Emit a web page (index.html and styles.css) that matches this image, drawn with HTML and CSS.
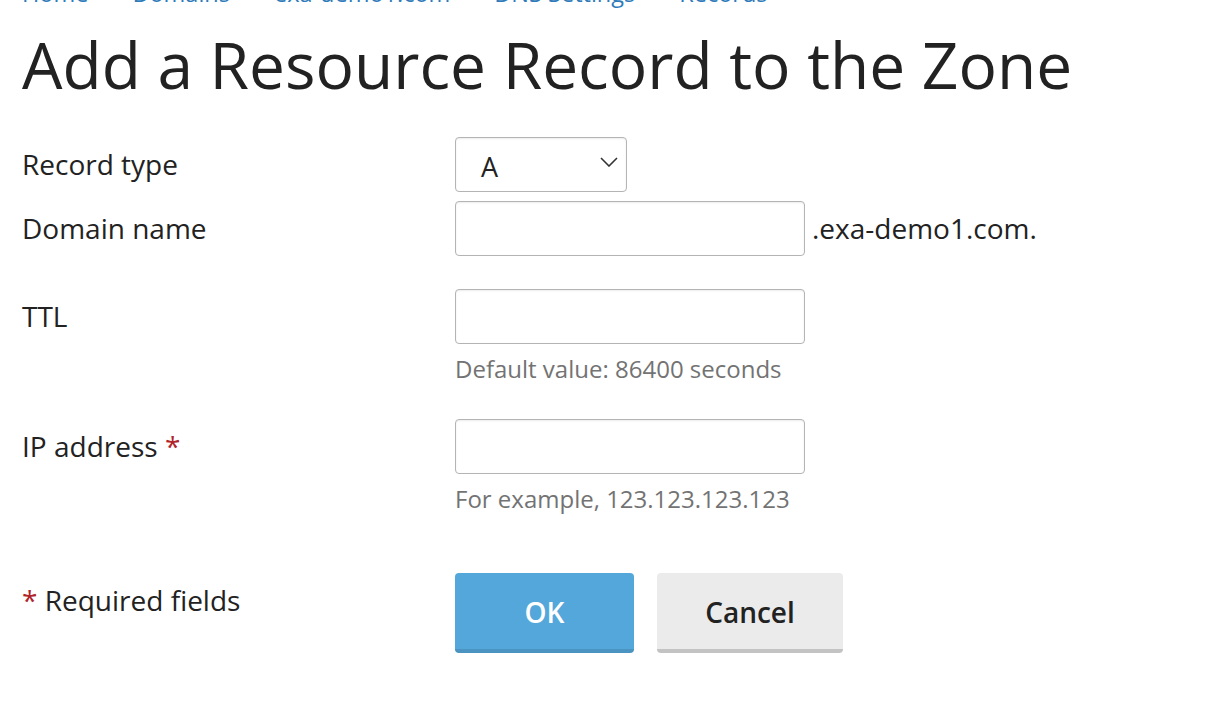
FILE: index.html
```html
<!DOCTYPE html>
<html lang="en">
<head>
<meta charset="utf-8">
<title>Add a Resource Record to the Zone</title>
<link rel="stylesheet" href="styles.css">
</head>
<body>
<div class="page">
  <nav class="breadcrumbs"><a href="#" class="crumb">Home</a><span class="sep"></span><a href="#" class="crumb">Domains</a><span class="sep"></span><a href="#" class="crumb">exa-demo1.com</a><span class="sep"></span><a href="#" class="crumb">DNS Settings</a><span class="sep"></span><a href="#" class="crumb">Records</a></nav>
  <h1 class="title">Add a Resource Record to the Zone</h1>
  <form class="form">
    <div class="row row-type">
      <div class="label">Record type</div>
      <div class="field">
        <div class="select">
          <span class="select-value">A</span>
          <svg class="chevron" width="18" height="10" viewBox="0 0 18 10"><path d="M1 1 L9 9 L17 1" fill="none" stroke="#333" stroke-width="1.6"/></svg>
        </div>
      </div>
    </div>
    <div class="row row-domain">
      <div class="label">Domain name</div>
      <div class="field field-inline">
        <input class="input" type="text">
        <span class="suffix">.exa-demo1.com.</span>
      </div>
    </div>
    <div class="row row-ttl">
      <div class="label">TTL</div>
      <div class="field">
        <input class="input" type="text">
        <div class="hint">Default value: 86400 seconds</div>
      </div>
    </div>
    <div class="row row-ip">
      <div class="label">IP address <span class="req">*</span></div>
      <div class="field">
        <input class="input" type="text">
        <div class="hint">For example, 123.123.123.123</div>
      </div>
    </div>
    <div class="row row-actions">
      <div class="label label-req"><span class="req">*</span> Required fields</div>
      <div class="field buttons">
        <button type="button" class="btn btn-primary">OK</button>
        <button type="button" class="btn btn-default">Cancel</button>
      </div>
    </div>
  </form>
</div>
</body>
</html>
```
FILE: styles.css
```css
html, body {
  margin: 0;
  padding: 0;
  background: #fff;
}
body {
  font-family: "Open Sans", "Noto Sans", sans-serif;
  color: #222;
  overflow: hidden;
}
.page {
  padding: 0 22px;
}
.breadcrumbs {
  margin-top: -25px;
  font-size: 23.5px;
  line-height: 36px;
  height: 36px;
  white-space: nowrap;
}
.crumb {
  color: #2f7bba;
  text-decoration: none;
}
.sep {
  display: inline-block;
  width: 44px;
}
.title {
  margin: 15px 0 33px;
  font-size: 64px;
  line-height: 78px;
  font-weight: 400;
  color: #222;
}
.form {
  margin: 0;
}
.row {
  display: flex;
  align-items: flex-start;
}
.label {
  width: 433px;
  flex: none;
  font-size: 28px;
  line-height: 55px;
  color: #222;
}
.req {
  color: #b0232b;
}
.field {
  display: flex;
  flex-direction: column;
  align-items: flex-start;
}
.field-inline {
  flex-direction: row;
  align-items: flex-start;
}
.row-type {
  margin-bottom: 9px;
}
.row-domain {
  margin-bottom: 33px;
}
.row-ttl {
  margin-bottom: 33px;
}
.row-ip {
  margin-bottom: 57px;
}
.select {
  box-sizing: border-box;
  width: 172px;
  height: 55px;
  border: 1px solid #b4b4b4;
  border-radius: 4px;
  box-shadow: inset 0 1px 2px rgba(0,0,0,0.08);
  display: flex;
  align-items: center;
  justify-content: space-between;
  padding: 4px 8px 0 25px;
  font-size: 27px;
  color: #222;
}
.chevron {
  margin-top: -10px;
}
.input {
  box-sizing: border-box;
  width: 350px;
  height: 55px;
  border: 1px solid #b4b4b4;
  border-radius: 4px;
  box-shadow: inset 0 1px 2px rgba(0,0,0,0.08);
  margin: 0;
  padding: 0 12px;
  font-family: inherit;
  font-size: 26px;
  background: #fff;
  outline: none;
}
.suffix {
  margin-left: 7px;
  font-size: 28px;
  line-height: 55px;
  color: #222;
}
.hint {
  margin-top: 8px;
  font-size: 24px;
  line-height: 34px;
  color: #737373;
}
.label-req {
  padding-top: 0;
}
.buttons {
  flex-direction: row;
  gap: 23px;
}
.btn {
  box-sizing: border-box;
  height: 80px;
  min-width: 179px;
  padding: 2px 46px 0;
  border: none;
  border-radius: 4px;
  font-family: inherit;
  font-size: 28px;
  font-weight: 600;
  cursor: pointer;
}
.btn-primary {
  background: #54a7da;
  color: #fff;
  border-bottom: 4px solid #4b93c1;
}
.btn-default {
  background: #ebebeb;
  color: #222;
  border-bottom: 4px solid #c3c3c3;
  min-width: 186px;
}
```
